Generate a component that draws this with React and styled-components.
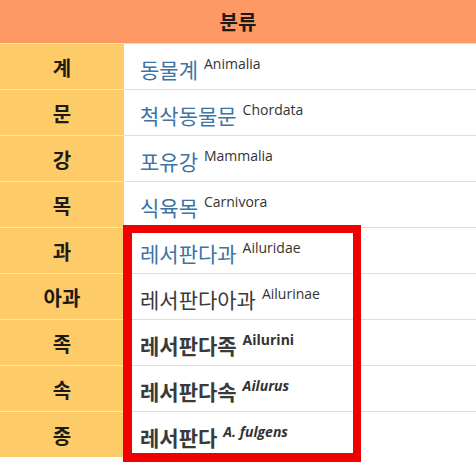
import React from "react";
import styled, { createGlobalStyle } from "styled-components";

const ranks = [
  { rank: "계", name: "동물계", latin: "Animalia", link: true },
  { rank: "문", name: "척삭동물문", latin: "Chordata", link: true },
  { rank: "강", name: "포유강", latin: "Mammalia", link: true },
  { rank: "목", name: "식육목", latin: "Carnivora", link: true },
  { rank: "과", name: "레서판다과", latin: "Ailuridae", link: true },
  { rank: "아과", name: "레서판다아과", latin: "Ailurinae" },
  { rank: "족", name: "레서판다족", latin: "Ailurini", bold: true },
  { rank: "속", name: "레서판다속", latin: "Ailurus", bold: true, italic: true },
  { rank: "종", name: "레서판다", latin: "A. fulgens", bold: true, italic: true },
];

const App = () => {
  return (
    <Page>
      <GlobalStyle />
      <Table>
        <Header>분류</Header>
        {ranks.map(r => (
          <Row key={r.rank}>
            <RankCell>{r.rank}</RankCell>
            <NameCell>
              <Name $link={r.link} $bold={r.bold}>
                {r.name}
              </Name>
              <Latin $bold={r.bold} $italic={r.italic}>
                {r.latin}
              </Latin>
            </NameCell>
          </Row>
        ))}
      </Table>
      <Highlight />
    </Page>
  );
};

export default App;

/** Styled components */
const GlobalStyle = createGlobalStyle`
  html, body {
    margin: 0;
    padding: 0;
    background: #fff;
  }
  body {
    font-family: "Open Sans", "Noto Sans CJK KR", sans-serif;
    color: #222;
  }
`;

const Page = styled.div`
  position: relative;
  width: 476px;
  height: 462px;
  overflow: hidden;
  background: #fff;
`;

const Table = styled.div`
  display: flex;
  flex-direction: column;
  width: 100%;
`;

const Header = styled.div`
  height: 43px;
  background: #fe9865;
  display: flex;
  align-items: center;
  justify-content: center;
  font-family: "Noto Sans CJK KR", sans-serif;
  font-weight: 700;
  font-size: 20px;
  color: #1e1a16;
`;

const Row = styled.div`
  display: grid;
  grid-template-columns: 124px 1fr;
  height: 46px;
`;

const RankCell = styled.div`
  background: #fecb69;
  border-top: 1px solid #fde4b0;
  display: flex;
  align-items: center;
  justify-content: center;
  padding-top: 2px;
  font-family: "Noto Sans CJK KR", sans-serif;
  font-weight: 700;
  font-size: 20px;
  color: #1e1a16;
`;

const NameCell = styled.div`
  border-top: 1px solid #dedede;
  display: flex;
  align-items: center;
  padding: 4px 0 0 16px;
  white-space: nowrap;
`;

const Name = styled.span`
  font-family: "Noto Sans CJK KR", sans-serif;
  font-size: 21px;
  font-weight: ${p => (p.$bold ? 700 : 400)};
  color: ${p => (p.$link ? "#3c74a4" : "#3a3a3a")};
`;

const Latin = styled.span`
  align-self: flex-start;
  margin: 6px 0 0 6px;
  font-family: "Open Sans", sans-serif;
  font-size: 14px;
  font-weight: ${p => (p.$bold ? 700 : 400)};
  font-style: ${p => (p.$italic ? "italic" : "normal")};
  color: #333;
`;

const Highlight = styled.div`
  position: absolute;
  left: 123px;
  top: 225px;
  width: 238px;
  height: 237px;
  box-sizing: border-box;
  border: 8px solid #f20000;
  border-left-width: 9px;
  border-bottom-width: 9px;
  pointer-events: none;
`;
